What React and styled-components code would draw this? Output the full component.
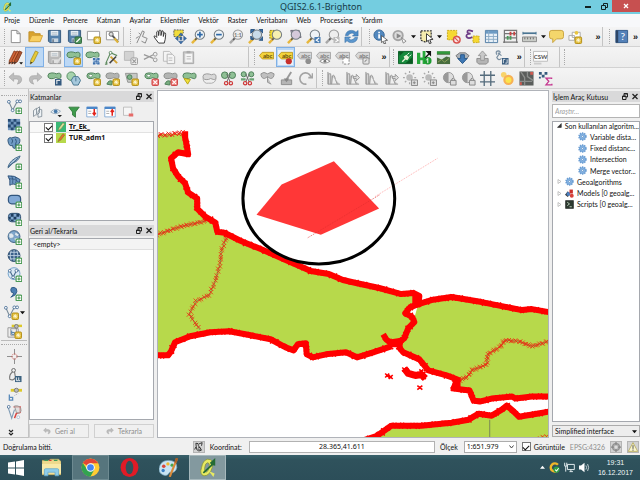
import React from "react";
import styled, { createGlobalStyle, css } from "styled-components";

const GlobalStyle = createGlobalStyle`
  * { box-sizing: border-box; }
  html, body, #root { margin: 0; height: 100%; }
  body { background: #fff; }
  body, button, input, select {
    font-family: Lato, "Liberation Sans", sans-serif;
    font-size: 7px;
    line-height: 10px;
    color: #111;
  }
  button { border: 0; background: none; padding: 0; }
  svg { display: block; }
  ul { list-style: none; margin: 0; padding: 0; }
`;

/* ---------- layout ---------- */
const Page = styled.div`
  height: 100vh;
  padding-bottom: 6px;
  display: flex;
  flex-direction: column;
  background: #fff;
  overflow: hidden;
`;
const TitleBar = styled.header`
  height: 14px;
  flex: none;
  display: grid;
  grid-template-columns: 1fr auto 1fr;
  align-items: center;
  background: #74cde0;
  padding-left: 2px;
`;
const Title = styled.h1`
  margin: 0;
  font: 9px/14px "Noto Sans", "Open Sans", sans-serif;
  color: #173b48;
`;
const WindowButtons = styled.div`
  display: flex;
  justify-content: flex-end;
  align-self: stretch;
`;
const WindowButton = styled.button`
  width: ${(p) => (p.$close ? 28 : 16)}px;
  height: 12px;
  display: grid;
  place-items: center;
  background: ${(p) => (p.$close ? "#c75050" : "transparent")};
`;
const MenuBar = styled.nav`
  flex: none;
  height: 13px;
  display: flex;
  gap: 9px;
  padding: 1px 4px;
  background: #f7f8fa;
`;
const MenuItem = styled.button`
  line-height: 11px;
  white-space: nowrap;
`;
const ToolRow = styled.div`
  flex: none;
  height: ${(p) => (p.$tall ? 21 : 20)}px;
  display: flex;
  align-items: stretch;
  background: linear-gradient(#f4f4f4, #ececec);
  border-bottom: 1px solid #d2d2d2;
`;
const Group = styled.div`
  flex: ${(p) => p.$w} 1 0;
  min-width: 0;
  display: flex;
`;
const ToolButton = styled.button`
  flex: ${(p) => (p.$small ? 2 : 5)} 1 0;
  min-width: 0;
  display: grid;
  place-items: center;
  ${(p) =>
    p.$active &&
    css`
      background: #bcd8f5;
      box-shadow: inset 0 0 0 1px #7fb0e6;
    `}
`;
const Handle = styled.div`
  flex: ${(p) => p.$w} 1 0;
  display: flex;
  justify-content: flex-end;
  padding: 2px 1px 2px 0;
  border-left: ${(p) => (p.$line ? "1px solid #c4c4c4" : "0")};
  &::after {
    content: "";
    border-left: 1px dotted #a9a9a9;
  }
`;
const More = styled.button`
  flex: ${(p) => p.$w} 1 0;
  min-width: 0;
  font: bold 9px/10px "Liberation Sans", sans-serif;
  text-align: center;
`;
const Main = styled.main`
  flex: 1;
  min-height: 0;
  display: grid;
  grid-template-columns: 29px 126px minmax(0, 1fr) 91px;
  background: #efefef;
`;
const SideBar = styled.aside`
  display: flex;
  flex-direction: column;
  min-height: 0;
  padding-top: 4px;
  border-right: 1px solid #c2c2c2;
  border-bottom: 1px solid #c2c2c2;
`;
const SideGroup = styled.div`
  display: grid;
  grid-auto-rows: 1fr;
  flex: ${(p) => p.$h} 1 0;
  min-height: 0;
`;
const SideHandle = styled.div`
  border-top: ${(p) => (p.$line ? "1px solid #bbb" : "0")};
  margin: 0 1px;
  height: ${(p) => (p.$line ? 7 : 4)}px;
  display: flex;
  align-items: center;
  &::after {
    content: "";
    flex: 1;
    border-top: 1px dotted #aaa;
  }
`;
const SideButton = styled.button`
  display: flex;
  align-items: center;
  justify-content: center;
  min-height: 0;
  gap: 1px;
`;
const DockColumn = styled.section`
  display: flex;
  flex-direction: column;
  gap: ${(p) => (p.$right ? 0 : 4)}px;
  min-height: 0;
  min-width: 0;
  padding: ${(p) => (p.$right ? "2px 0 1px 3px" : "2px 1px 0 0")};
`;
const Dock = styled.section`
  display: flex;
  flex-direction: column;
  min-height: 0;
  flex: ${(p) => p.$h} 1 0;
`;
const DockTitle = styled.header`
  height: 11px;
  flex: none;
  display: flex;
  align-items: center;
  gap: 4px;
  padding: 0 2px 0 1px;
  background: #d9d9da;
  & > h2 {
    flex: 1;
    min-width: 0;
    margin: 0;
    font-size: 7px;
    font-weight: normal;
    white-space: nowrap;
  }
`;
const DockTools = styled.div`
  height: 19px;
  flex: none;
  display: flex;
  gap: 4px;
  padding-left: 2px;
  & > button {
    width: 14px;
    display: grid;
    place-items: center;
  }
`;
const Sheet = styled.div`
  flex: 1;
  min-height: 0;
  background: #fff;
  border: 1px solid #a5a8ae;
  margin-top: ${(p) => p.$top || 0}px;
`;
const LayerItem = styled.li`
  height: 11px;
  display: flex;
  align-items: center;
  padding-left: 14px;
  border-bottom: 1px solid ${(p) => (p.$current ? "#e2e2e2" : "transparent")};
  background: ${(p) => (p.$current ? "#f8f8f8" : "#fff")};
  & > label {
    display: flex;
    align-items: center;
    gap: 3px;
    font: bold 7px/10px "Noto Sans", sans-serif;
    text-decoration: ${(p) => (p.$current ? "underline" : "none")};
  }
`;
const Check = styled.input.attrs({ type: "checkbox" })`
  appearance: none;
  width: 9px;
  height: 9px;
  margin: 0;
  border: 1px solid #777;
  background: #fff;
  display: grid;
  place-items: center;
  &:checked::before {
    content: "";
    width: 5px;
    height: 3px;
    border: solid #111;
    border-width: 0 0 1px 1px;
    transform: rotate(-45deg);
  }
`;
const UndoRow = styled.div`
  padding: 0 3px;
  background: #f4f4f4;
  border-bottom: 1px solid #e0e0e0;
`;
const ButtonPair = styled.div`
  flex: none;
  display: grid;
  grid-template-columns: 1fr 1fr;
  gap: 5px;
  padding-top: 4px;
`;
const DisabledButton = styled.button`
  height: 14px;
  display: flex;
  align-items: center;
  justify-content: center;
  gap: 4px;
  border: 1px solid #d0d0d0;
  background: #f0f0f0;
  color: #8d8d8d;
`;
const MapFrame = styled.div`
  margin-left: 2px;
  margin-top: 1px;
  min-width: 0;
  min-height: 0;
  border: 1px solid #b0b3b9;
  background: #fff;
  overflow: hidden;
  & > svg {
    width: 100%;
    height: 100%;
  }
`;
const Search = styled.input`
  height: 14px;
  min-width: 0;
  margin: 2px 0 3px;
  padding: 0 2px;
  border: 1px solid #b4b4b4;
  background: #fff;
  font-style: italic;
  &::placeholder { color: #a0a0a0; }
`;
const Tree = styled.ul`
  display: grid;
  grid-template-rows: repeat(8, 1fr);
  height: 90px;
  margin-top: -2px;
`;
const TreeItem = styled.li`
  display: flex;
  align-items: center;
  min-width: 0;
  gap: 3px;
  padding-left: ${(p) => (p.$leaf ? 25 : 4)}px;
  white-space: nowrap;
`;
const SelectBox = styled.div`
  display: grid;
  align-items: center;
  min-width: 0;
  width: ${(p) => (p.$fixed ? "53px" : "auto")};
  margin-top: ${(p) => (p.$fixed ? 0 : 3)}px;
  & > * { grid-area: 1 / 1; }
  & > svg { justify-self: end; margin-right: 3px; pointer-events: none; }
`;
const Select = styled.select`
  appearance: none;
  width: 100%;
  height: 12px;
  padding: 0 2px;
  border: 1px solid #acacac;
  border-radius: 0;
  background: ${(p) => (p.$plain ? "#fff" : "#ededed")};
  font-family: ${(p) => (p.$plain ? '"Noto Sans", sans-serif' : "inherit")};
`;
const StatusBar = styled.footer`
  flex: none;
  height: 17px;
  display: flex;
  align-items: center;
  gap: 5px;
  padding: 0 1px 0 3px;
  background: #f0f0f0;
  white-space: nowrap;
`;
const StatusText = styled.output`
  flex: 187 1 0;
`;
const CoordLabel = styled.label`
  flex: 228 1 0;
  display: flex;
  align-items: center;
  gap: 7px;
`;
const CoordInput = styled.input`
  flex: 1;
  min-width: 0;
  height: 12px;
  padding: 0;
  border: 1px solid #b2b2b2;
  background: #fff;
  text-align: center;
  font-family: "Noto Sans", sans-serif;
`;
const InlineLabel = styled.label`
  display: flex;
  align-items: center;
  gap: ${(p) => (p.$wide ? 6 : 3)}px;
`;
const Muted = styled.button`
  color: #8f8f8f;
`;
const IconButton = styled.button`
  width: 12px;
  height: 12px;
  display: grid;
  place-items: center;
  background: #d2d2d2;
  border: 1px solid #b4b4b4;
`;
const TaskBar = styled.nav`
  flex: none;
  height: 25px;
  display: flex;
  background: linear-gradient(#3a626c, #2f525c 20%, #2c4e59);
`;
const TaskButton = styled.button`
  width: ${(p) => (p.$start ? 31 : 37)}px;
  margin-right: 2px;
  display: grid;
  place-items: center;
  ${(p) => p.$level === 1 && "background:#56757d; box-shadow: inset 0 0 0 1px #6d8a91;"}
  ${(p) => p.$level === 2 && "background:#83999f; box-shadow: inset 0 0 0 1px #a6b8bc;"}
`;
const Tray = styled.div`
  margin-left: auto;
  display: flex;
  align-items: center;
  gap: 4px;
  padding-right: 7px;
`;
const Clock = styled.time`
  color: #f2f7f8;
  font-family: "Liberation Sans", sans-serif;
  text-align: center;
  padding-left: 4px;
  & > span { display: block; }
`;

/* ---------- icon parts ---------- */
const BLOB = "M1 5Q1 2 5 2Q8 2 10 3Q15 1 15 5Q15 9 12 8Q9 6 7 8Q1 9 1 5Z";
const Svg = ({ s = 15, children }) => (
  <svg width={s} height={s} viewBox="0 0 16 16" fill="none" aria-hidden="true">
    {children}
  </svg>
);
const Blob = ({ grey, hole }) => (
  <>
    <path d={BLOB} fill={grey ? "#b3b5b3" : "#8fc095"} stroke={grey ? "#8b8d8b" : "#4a7d55"} />
    {hole && <ellipse cx="5" cy="5" rx="2" ry="1.4" fill="#fff" stroke={grey ? "#8b8d8b" : "#4a7d55"} strokeWidth=".7" />}
  </>
);
const Star = ({ x = 8, y = 8 }) => (
  <g transform={`translate(${x} ${y})`}>
    <rect x=".5" y=".5" width="7" height="7" rx="1.2" fill="#e3bd38" stroke="#b18d16" />
    <path d="M4 1.6V6.4M1.6 4H6.4M2.4 2.4L5.6 5.6M5.6 2.4L2.4 5.6" stroke="#fffbe0" strokeWidth=".8" />
  </g>
);
const Cross = ({ grey }) => (
  <g transform="translate(8 8)">
    <rect x=".5" y=".5" width="7" height="7" rx="1.2" fill={grey ? "#eee" : "#ec7b78"} stroke={grey ? "#999" : "#cb3f3f"} />
    <path d="M2 2L6 6M6 2L2 6" stroke={grey ? "#999" : "#fff"} strokeWidth="1.2" />
  </g>
);
const Plus = () => (
  <g transform="translate(9 9)">
    <rect x=".7" y=".7" width="6" height="6" rx="1" fill="#fff" stroke="#4b9a55" strokeWidth="1.3" />
    <path d="M3.7 2V5.4M2 3.7H5.4" stroke="#3c8f47" strokeWidth="1.1" />
  </g>
);
const Disk = ({ grey }) => (
  <>
    <path d="M1.5 1.5H14.5V14.5H3L1.5 13Z" fill={grey ? "#b9b9b9" : "#5380ab"} stroke={grey ? "#999" : "#34587c"} />
    <path d="M4 2H12V7H4Z" fill={grey ? "#ededed" : "#e8eff5"} />
    <path d="M5 4H11M5 5.6H11" stroke="#9aabb8" strokeWidth=".7" />
    <path d="M5 10H12V14H5Z" fill={grey ? "#e0e0e0" : "#c9d6e1"} />
    <path d="M6.5 11V14" stroke={grey ? "#999" : "#54677a"} strokeWidth="1.4" />
  </>
);
const Mag = ({ grey, tint, children }) => (
  <>
    <path d="M1 15L6 10" stroke={grey ? "#a8a8a8" : "#e7b73c"} strokeWidth="2.6" />
    <path d="M4.4 11.6L6.4 9.6" stroke="#555" strokeWidth="1.6" />
    <circle cx="9.5" cy="6" r="5" fill={tint || (grey ? "#eee" : "#eef3f6")} stroke={grey ? "#999" : "#747d83"} strokeWidth="1.1" />
    {children}
  </>
);
const Label = ({ fill, stroke, text }) => (
  <>
    <path d="M.5 6L3.5 2.5H15.5V9.5H3.5Z" fill={fill} stroke={stroke} />
    <text x="9.3" y="8.3" fontSize="6.5" fontWeight="bold" textAnchor="middle" fill={text}>abc</text>
  </>
);
const Pencil = ({ c = "#e5c93a", d = "#a08b1f", dx = 0 }) => (
  <g transform={`translate(${dx} 0)`}>
    <path d="M4 11L9 1L12 2.5L7 12.5L3.5 15Z" fill={c} stroke={d} strokeWidth=".8" />
    <path d="M3.5 15L4 12.4L5.8 13.4Z" fill="#333" />
  </g>
);
const Sheet0 = () => <path d="M1.5 2.5H14.5V11.5H1.5Z" fill="#fff" stroke="#999" />;
const Gear = ({ s = 9 }) => (
  <Svg s={s}>
    <circle cx="8" cy="8" r="6" fill="#89b5e2" stroke="#6c9ed3" strokeWidth="3" strokeDasharray="2.4 1.4" />
    <circle cx="8" cy="8" r="4.6" fill="#8db9e6" stroke="#6a9dd2" />
    <circle cx="8" cy="8" r="1.8" fill="#e8f2fb" stroke="#4e83ba" />
  </Svg>
);
const Hist = ({ arrow }) => (
  <>
    <path d="M2 1V14H15M3 14V3H5V14M6 14L7 5Q9 3 10 9L12 14" fill="#c9c9c9" stroke="#979797" />
    {arrow && <path d="M9 6H12V3.5L15.5 7L12 10.5V8H9Z" fill="#ddd" stroke="#999" />}
  </>
);
const Dot = ({ cx, cy, r = 1.5, f = "#fff", s = "#446b94" }) => <circle cx={cx} cy={cy} r={r} fill={f} stroke={s} strokeWidth=".9" />;
const Raise = ({ lock }) => <path d={lock ? "M9 10H15V15H9ZM10.5 10V8.5Q12 6.5 13.5 8.5V10" : "M9 9.5H15.5V15.5H9ZM12 11V14M10.5 12.5H13.5"} fill="#ddd" stroke="#858585" />;
const Globe = () => (
  <>
    <circle cx="7.5" cy="7" r="6.3" fill="#7fa9d0" stroke="#34597e" />
    <path d="M2 4Q5 2 7 5T4 9L2 8ZM9 2L13 5L11 7L8 5ZM7 9L12 8L10 13Z" fill="#dfe9f0" stroke="#5d83a6" strokeWidth=".5" />
  </>
);

const I = {
  file: <path d="M3.500 1.500H9.500L13 5V14.500H3.500ZM9.500 1.500V5H13" fill="#fff" stroke="#8a8a8a" />,
  open: <><path d="M1 13V3H6L7.500 5H13V8" fill="#d9a32e" stroke="#c0902a" /><path d="M1 13.500L4 7H15.500L13 13.500Z" fill="#f8cf62" stroke="#d5a338" /></>,
  save: <Disk />,
  saveAs: <><Disk /><rect x="8.500" y="8.500" width="7" height="7" rx="1" fill="#4b8f58" stroke="#2f6a3c" /><path d="M10 14L14 10" stroke="#fff" strokeWidth="1.500" /></>,
  newPrint: <><Sheet0 /><Star /></>,
  composer: <><Sheet0 /><path d="M7 6L14 14" stroke="#555" strokeWidth="2" /><path d="M10 10L14 14.500" stroke="#e0b53c" strokeWidth="2.400" /><circle cx="6.500" cy="5.500" r="2.200" fill="#ddd" stroke="#666" /></>,
  touch: <path d="M3 15L9 2L11 3L9 8L14 10L12 15L8 13M2 10L5 8M5 4L7 6" fill="#eee" stroke="#858585" />,
  hand: <path d="M6 15Q2 10 1 8Q2 6 4 9L4 3Q5 1.500 6 3V7L6.500 1.500Q8 .5 8.500 2V7L9.500 2Q11 1.500 11 3V8L12 4Q14 4 13.500 6L13 11L12 15Z" fill="#fff" stroke="#333" />,
  panSel: <><path d="M2 1H12V4L9 9L2 8Z" fill="#f2dd3a" stroke="#555" strokeDasharray="2 1" /><path d="M9.500 4L12 7H7ZM9.500 16L7 13H12ZM3.500 10L6.500 7.500V12.500ZM15.500 10L12.500 7.500V12.500ZM8.500 8.500H10.500V11.500H8.500Z" fill="#3b70ad" stroke="#244c7b" strokeWidth=".5" /></>,
  zoomIn: <Mag><path d="M9.500 3V9M6.500 6H12.500" stroke="#2e69a8" strokeWidth="1.800" /></Mag>,
  zoomOut: <Mag><path d="M6.500 6H12.500" stroke="#2e69a8" strokeWidth="1.800" /></Mag>,
  zoom1: <Mag grey><text x="9.500" y="8.200" fontSize="6" textAnchor="middle" fontWeight="bold" fill="#777">1:1</text></Mag>,
  zoomFull: <><Mag tint="#c8dbe9" /><path d="M3 .5H7L3 4.500ZM16 .5V4.500L12 .5ZM16 12H12L16 8ZM3 7.500V11L6 11Z" fill="#3d70a6" stroke="#28527f" /></>,
  zoomSel: <><path d="M2 1.500H10V10H2Z" fill="#f6df33" stroke="#8f7b16" strokeDasharray="2 1" /><Mag tint="#f7efb0" /></>,
  zoomLayer: <><path d="M4 1.500H13L15 9H6Z" fill="#a8a1b2" stroke="#6d6578" /><Mag tint="#d5c9da" /></>,
  zoomLast: <><Mag /><path d="M9 8.500H15.500V15H9Z" fill="#4b7eb2" /><path d="M14 9.500L11 12L14 14" stroke="#fff" strokeWidth="1.200" /></>,
  zoomNext: <><Mag grey /><path d="M9 8.500H15.500V15H9Z" fill="#bbb" /><path d="M11 9.500L14 12L11 14" stroke="#fff" strokeWidth="1.200" /></>,
  refresh: <><path d="M1.500 7Q2.500 1.500 8 1.500Q11 1.500 12.800 3.500L15 1.500V7.500H9L11 5.500Q9.500 4 7.500 4.500Q5 5 4.500 7Z" fill="#4f8cc6" stroke="#2f6aa3" strokeWidth=".6" /><path d="M14.500 9Q13.500 14.500 8 14.500Q5 14.500 3.200 12.500L1 14.500V8.500H7L5 10.500Q6.500 12 8.500 11.500Q11 11 11.500 9Z" fill="#5d98cf" stroke="#2f6aa3" strokeWidth=".6" /></>,
  identify: <><circle cx="6.500" cy="6.500" r="5.500" fill="#5288bf" stroke="#356696" /><path d="M6.500 3V4.500M6.500 5.500V10" stroke="#fff" strokeWidth="1.800" /><path d="M9 7L15.500 12L12.500 12.500L13.500 15.500L11.500 15.500L11 13L9 14.500Z" fill="#fff" stroke="#444" strokeWidth=".8" /></>,
  action: <><circle cx="6.500" cy="7" r="5" fill="#ddd" stroke="#a4a4a4" strokeWidth="2" /><path d="M5 4.500L10 7.500L5 10Z" fill="#888" /><path d="M10 9L15 13L12 15Z" fill="#fff" stroke="#888" /></>,
  select: <><path d="M2 2H13V8L7 14L2 12Z" fill="#f5ecad" stroke="#333" strokeDasharray="2 1.200" strokeWidth="1.300" /><path d="M8 5L15 11L11.500 11.500L13 15L11 15.500L10 12L8 13.500Z" fill="#fff" stroke="#333" /></>,
  deselect: <><path d="M1.500 1.500H11.500V11.500H1.500Z" fill="#f6d832" stroke="#c8a91b" strokeDasharray="2 1" /><circle cx="11.500" cy="11.500" r="3.500" fill="#fbe6e6" stroke="#d9534f" strokeWidth="1.600" /><path d="M9.500 9.500L13.500 13.500" stroke="#d9534f" strokeWidth="1.300" /></>,
  epsilon: <><path d="M8.500 2.500Q2 0 2.500 3.500Q3 5 6 5Q1 5 1.500 8Q3 11 8 8.500" stroke="#6c3a85" strokeWidth="1.800" /><path d="M8.500 7.500H15V14.500H8.500Z" fill="#f6d832" stroke="#c8a91b" strokeDasharray="2 1" /></>,
  table: <><path d="M1.500 1.500H14.500V14.500H1.500Z" fill="#e8f0f7" stroke="#4f7ba3" /><path d="M2 2H14V5H2Z" fill="#6c9bc4" /><path d="M5 2V14M2 8H14M2 11H14M10 5V14" stroke="#8cacc6" /></>,
  abacus: <><path d="M1.500 15V1.500H14.500V15M1.500 5H14.500M1.500 9.500H14.500M0 14H16" stroke="#777" strokeWidth="1.300" /><path d="M7 3H9V7H7ZM11 3H13V7H11Z" fill="#c94340" /><path d="M4 7.500H6V11.500H4ZM7 7.500H9V11.500H7Z" fill="#489858" /></>,
  ruler: <><path d="M1 4.500H15" stroke="#4a7593" strokeWidth="1.800" /><path d="M1 3V6M15 3V6" stroke="#4a7593" /><path d="M.5 8.500H15.500V13.500H.5Z" fill="#c9ccc7" stroke="#888" /><path d="M3 9V11M6 9V11M9 9V11M12 9V11" stroke="#666" /></>,
  tip: <path d="M3 1.500H13Q15.500 1.500 15.500 4V8Q15.500 10.500 13 10.500H8L4 14.500V10.500H3Q.5 10.500 .5 8V4Q.5 1.500 3 1.500Z" fill="#f4d66b" stroke="#c8a13a" />,
  note: <><path d="M4.500 3.500H13V9H4.500ZM1 7H7V12H1Z" fill="#fff" stroke="#aaa" /><circle cx="9" cy="4" r="2" fill="#eac641" /><Star x={7} y={8} /></>,
  book: <><path d="M2 1.500H14.500V14.500H2Z" fill="#5481b8" stroke="#335a8a" /><path d="M2 1.500H4.500V14.500H2Z" fill="#2e4666" /><text x="9.500" y="12" fontSize="11" textAnchor="middle" fill="#fff">?</text></>,
  edits: <><Pencil c="#cf6337" d="#7c3213" dx={-2.5} /><Pencil c="#d8703f" d="#7c3213" dx={0.5} /><Pencil c="#a95331" d="#7c3213" dx={3} /><path d="M12 13H16L14 15.500Z" fill="#111" /></>,
  edit: <Pencil />,
  saveGrey: <><Disk grey /><path d="M10 14L15 8" stroke="#ddd" strokeWidth="2" /></>,
  addFeat: <><Blob /><Star /></>,
  moveFeat: <><Blob /><path d="M8 8H15.500V15.500H8Z" fill="#dbe7f3" /><path d="M8.500 8.500H11V11H8.500ZM13 8.500H15.500V11H13ZM8.500 13H11V15.500H8.500ZM13 13H15.500V15.500H13Z" fill="#3e71ad" /><path d="M12 9V15M9 12H15" stroke="#3e71ad" /></>,
  node: <><path d="M2 14L7 3L14 6M1 15H3V13" stroke="#5d8a5e" strokeWidth="1.200" /><Dot cx="7" cy="3" s="#4d7d54" /><path d="M7 7L14 14" stroke="#d2a233" strokeWidth="2" /><path d="M13 7L6 14" stroke="#444" strokeWidth="1.600" /></>,
  del: <><path d="M1.500 1.500H11.500V11H1.500Z" fill="#d2d2d2" stroke="#b7b7b7" /><Cross grey /></>,
  cut: <><path d="M1 5L11 9M1 10L11 5" stroke="#999" strokeWidth="1.300" /><circle cx="13" cy="4.500" r="2" stroke="#999" /><circle cx="13" cy="10.500" r="2" stroke="#999" /></>,
  copy: <><path d="M1.500 1.500H8L10 3.500V12H1.500Z" fill="#f4f4f4" stroke="#bbb" /><path d="M5.500 4.500H11L13.500 7V14.500H5.500Z" fill="#f4f4f4" stroke="#b3b3b3" /><path d="M7 8.500H11M7 11H11" stroke="#bbb" /></>,
  paste: <><path d="M2.500 2H13.500V14.500H2.500Z" fill="#c9c9c9" stroke="#a8a8a8" /><path d="M4.500 4H12V13H4.500Z" fill="#f4f4f4" /><path d="M6 1H10V3.500H6Z" fill="#aaa" /><path d="M6 7H10.500M6 9.500H10.500" stroke="#bbb" /></>,
  abc: <Label fill="#f3d33c" stroke="#bf9c22" text="#5c4a0c" />,
  abcPin: <><path d="M0 0H16V16H0Z" fill="#e9f1fa" /><Label fill="#f3d33c" stroke="#bf9c22" text="#5c4a0c" /><circle cx="11.500" cy="12" r="3.300" fill="#c8302c" /></>,
  abcG1: <><Label fill="#d7d7d7" stroke="#a5a5a5" text="#777" /><circle cx="12" cy="12" r="3" fill="#8f8f8f" /></>,
  abcG2: <><Label fill="#d7d7d7" stroke="#a5a5a5" text="#777" /><path d="M4 12Q9 7.500 15 12Q9 16 4 12Z" fill="#fff" stroke="#888" /><circle cx="9.500" cy="12" r="1.500" fill="#777" /></>,
  abcG3: <><Label fill="#d7d7d7" stroke="#a5a5a5" text="#777" /><path d="M8.500 8.500H15V15H8.500Z" fill="#fff" stroke="#888" strokeDasharray="2.500 1.500" /></>,
  abcG4: <><Label fill="#d7d7d7" stroke="#a5a5a5" text="#777" /><rect x="8.500" y="8.500" width="6.500" height="6.500" rx="1" fill="#e5e5e5" stroke="#888" /><path d="M10.500 13Q10.500 10.500 13 10.500" stroke="#888" /></>,
  plug: <><path d="M.5 1.500H15.500V14.500H.5Z" fill="#168b3c" stroke="#0b5f26" /><path d="M1 2H6L2 6ZM8 14L15 8V14Z" fill="#0a5a22" /><path d="M4 12L7 9L6 7L9 5L12 8L10 11L8 10L5 13Z" fill="#e7f2d7" /><path d="M10 5L12 3M12 7L14 5" stroke="#fff" /></>,
  hub: <><path d="M0 15V3H3.500V8H6V1H9V15H6V11H3.500V15Z" fill="#28a83c" /><path d="M9 1H15V7L13 5L9 9L8 8L12 4Z" fill="#111" /><circle cx="11.500" cy="11.500" r="4" fill="#1d9c31" /><path d="M10 11L11.500 9V14" stroke="#fff" /></>,
  terrain: <><path d="M1 1.500H15V15H1Z" fill="#486e3f" /><path d="M1 1.500H15V4H1Z" fill="#2f9c3b" /><path d="M1 5H15V8L11 7L6 10L1 8Z" fill="#d9e3df" /><path d="M2 13L6 10L9 13L14 9" stroke="#92a35d" /></>,
  down: <><path d="M1 6L5 3H11L15 6L12 10H4Z" fill="#aeb4bb" stroke="#777" /><path d="M6 5H10V9H13L8 14.500L3 9H6Z" fill="#3f78b5" stroke="#285788" /></>,
  up: <><path d="M2 9H14V13L12 15H4L2 13Z" fill="#b5b5b5" stroke="#8b8b8b" /><path d="M6 11H10V6H12.500L8 1L3.500 6H6Z" fill="#c9c9c9" stroke="#999" /></>,
  gps: <><path d="M3 5Q1 1 5 1Q8 2 5 5L3 8Q5 12 8 9M4 3L8 6" stroke="#7a8fa1" strokeWidth="1.300" /><path d="M8.500 8.500H15.500V15.500H8.500Z" fill="#3b5e80" /><path d="M10 14V10H12M12 14H14V10" stroke="#fff" strokeWidth=".8" /></>,
  csw: <><path d="M.5 1.500H15.500V12H.5Z" fill="#fdfdfd" stroke="#bbb" /><path d="M1 14.500H9" stroke="#ccc" strokeWidth="2" /><text x="8" y="9.300" fontSize="6.500" fontWeight="bold" textAnchor="middle" fill="#555">CSW</text></>,
  undo: <path d="M1 6.500L6 2V5H10Q15 5 14.500 10Q14 13 10 14Q13 8.500 9 8.500H6V11Z" fill="#bcbcbc" stroke="#a3a3a3" strokeWidth=".7" />,
  redo: <path d="M15 6.500L10 2V5H6Q1 5 1.500 10Q2 13 6 14Q3 8.500 7 8.500H10V11Z" fill="#bcbcbc" stroke="#a3a3a3" strokeWidth=".7" />,
  rotate: <><Blob /><path d="M8.500 8.500H15.500V15.500H8.500Z" fill="#33597f" /><path d="M10 10H14M10.500 10V14" stroke="#fff" /></>,
  simplify: <><circle cx="5.500" cy="5.500" r="4.500" fill="#a6d3ad" stroke="#558c61" /><path d="M8 6H13L15.500 10L13 15H8L5.500 10Z" fill="#a5c8dc" stroke="#44738e" /><path d="M10.500 7V11" stroke="#44738e" /></>,
  ring: <><Blob hole /><Star /></>,
  part: <><Blob grey /><path d="M2 14Q4 9 8 11L7 15Z" fill="#79ad80" stroke="#4a7d55" /><Star /></>,
  fill: <><path d="M1.500 2.500H14V12H4Z" fill="#c6c8c5" stroke="#919391" /><circle cx="6" cy="6.500" r="2.500" fill="#7fb389" stroke="#4a7d55" /><Star /></>,
  delRing: <><Blob hole /><Cross /></>,
  delPart: <><Blob grey /><path d="M2 14Q4 9 8 11L7 15Z" fill="#79ad80" stroke="#4a7d55" /><Cross /></>,
  reshape: <><Blob /><path d="M2 8L9 9L6 14Z" fill="#f1e13c" stroke="#b7a316" /></>,
  offset: <><path d={BLOB} fill="#d8d8d8" stroke="#999" transform="translate(0 1)" /><path d="M1 8Q2 14 7 13Q14 14 15 8" stroke="#aaa" /></>,
  split: <><circle cx="4" cy="4.500" r="3.500" fill="#8fc095" stroke="#4a7d55" /><circle cx="12" cy="4.500" r="3.500" fill="#8fc095" stroke="#4a7d55" /><path d="M6 12L10 3M10 12L6 3" stroke="#666" /><circle cx="5.500" cy="13" r="1.800" stroke="#cf3535" strokeWidth="1.300" /><circle cx="10.500" cy="13" r="1.800" stroke="#cf3535" strokeWidth="1.300" /></>,
  splitParts: <><circle cx="4" cy="3.500" r="2.700" fill="#8fc095" stroke="#4a7d55" /><circle cx="12" cy="3.500" r="2.700" fill="#8fc095" stroke="#4a7d55" /><path d="M1 9H6M10 9H15" stroke="#6aa274" strokeWidth="2.500" /><path d="M6 12L10 3M10 12L6 3" stroke="#666" /><circle cx="5.500" cy="13" r="1.800" stroke="#cf3535" strokeWidth="1.300" /><circle cx="10.500" cy="13" r="1.800" stroke="#cf3535" strokeWidth="1.300" /></>,
  merge: <path d="M1 3Q4 0 8 3Q12 0 15 3Q15 8 11 8L8 6L5 8Q1 8 1 3ZM8 6V12L12 14" fill="#c0c0c0" stroke="#939393" />,
  attrs: <><path d="M2.500 9.500H13.500V14.500H2.500Z" fill="#b5b5b5" stroke="#8d8d8d" /><path d="M8 9L13 1" stroke="#999" strokeWidth="2" /><path d="M5 8H11L8 12Z" fill="#888" /></>,
  symbols: <path d="M14 8A6 6 0 1 0 9 14M11 7H15.500V2.500" stroke="#a4a4a4" strokeWidth="1.800" />,
  h1: <Hist />, h2: <Hist arrow />,
  bright: <><circle cx="7" cy="7" r="3.500" fill="#bbb" /><path d="M7 0V2M7 12V14M0 7H2M12 7H14M2 2L3.500 3.500M12 2L10.500 3.500M2 12L3.500 10.500" stroke="#aaa" strokeWidth="1.300" /><Raise /></>,
  contrast: <><circle cx="7" cy="7" r="5.500" fill="#ddd" stroke="#999" /><path d="M7 1.500A5.500 5.500 0 0 0 7 12.500Z" fill="#999" /><Raise lock /></>,
  grid: <path d="M4.500 0V16M11.500 0V16M0 4.500H16M0 11.500H16" stroke="#546b7c" strokeWidth="1.400" />,
  heat: <><circle cx="4" cy="4" r="3" fill="#f8d36a" /><circle cx="9" cy="9.500" r="5.500" fill="#f7b155" /><circle cx="9" cy="9.500" r="3.200" fill="#fbe54d" /></>,
  raster: <><path d="M.5 .5H15.500V15.500H.5Z" fill="#5a5d5b" /><path d="M2 1L6 7V15M9 1V6L15 10M1 11H14" stroke="#8b8e8c" strokeWidth="1.400" /><path d="M12 1H15V4H12ZM1 12H3V15H1Z" fill="#cf5a50" /></>,
  sigma: <><path d="M1 1H4V4H1ZM4 4H7V7H4ZM7 1H10V4H7ZM1 6H3V8H1Z" fill="#34597c" /><path d="M14.500 8.500V7.500H8.500L11.500 11L8.500 14.800H14.800V13.500" stroke="#c5358f" strokeWidth="1.400" /></>,
};

const SIDE = {
  vector: <><path d="M2 3L6 12L11 2.500H14" stroke="#7b8c99" strokeWidth="1.200" /><Dot cx="2" cy="3" /><Dot cx="6" cy="12" /><Dot cx="11" cy="2.500" /><Dot cx="14" cy="2.500" /><Plus /></>,
  raster: <><path d="M1 1H14V13H1Z" fill="#7398c0" /><path d="M1 1H4V4H1ZM7 1H10V4H7ZM4 4H7V7H4ZM10 4H14V7H10ZM1 7H4V10H1ZM7 7H10V10H7ZM4 10H7V13H4Z" fill="#264b73" /><Plus /></>,
  postgis: <><path d="M1 5Q1 1 5 2Q9 0 12 2Q15 3 13 8Q11 11 9 9V13Q6 14 6 10Q2 12 1 5Z" fill="#6f9bc4" stroke="#2e5378" /><path d="M5 3Q7 5 5 8M9 3Q11 6 9 9" stroke="#2e5378" /><Plus /></>,
  spatialite: <><path d="M1 13Q3 5 14 1Q12 7 5 9Z" fill="#a8c3da" stroke="#3f6587" /><path d="M1 14L12 3" stroke="#3f6587" /><Plus /></>,
  mssql: <><path d="M1 2Q8 1 14 6L12 13Q7 9 3 12Q4 6 1 2Z" fill="#6e98c4" stroke="#2b4f77" /><path d="M5 2Q7 6 6 10M9 3Q11 7 9 10M2 5Q8 4 13 9" stroke="#2b4f77" strokeWidth=".8" /><Plus /></>,
  oracle: <><rect x="1.500" y="2.500" width="13" height="9" rx="3.500" fill="#82a9d6" stroke="#32567e" strokeWidth="1.300" /><Plus /></>,
  georaster: <><rect x="1.500" y="2.500" width="13" height="9" rx="3.500" fill="#83a9d0" stroke="#244567" /><path d="M4 3H7V6H4ZM10 3H13V6H10ZM7 6H10V9H7ZM2 6H4V9H2ZM4 9H7V11H4Z" fill="#1f3e60" /><Plus /></>,
  wms: <><Globe /><Plus /></>,
  wcs: <><circle cx="7.500" cy="7" r="6.300" fill="#395f8a" stroke="#254567" /><path d="M1 7H14M7.500 1V13M3 3.500H12M3 10.500H12M4.500 2Q2 7 4.500 12M10.500 2Q13 7 10.500 12" stroke="#c7d8e6" strokeWidth=".9" /><Plus /></>,
  wfs: <><circle cx="7.500" cy="7" r="6.300" fill="#dbe9f5" stroke="#6d9fc9" /><path d="M3 4L6.500 11L10 4H13" stroke="#4b6d8d" strokeWidth="1.200" /><Dot cx="3" cy="4" /><Dot cx="6.500" cy="11" /><Dot cx="10" cy="4" /><Plus /></>,
  csv: <><path d="M4 4Q4 1 7.500 1.500Q11 2 10.500 6Q10 10 4 12Q7 9.500 7 7.500Q4 7.500 4 4Z" fill="#4c7fb3" stroke="#305a86" /><Plus /></>,
  newShape: <><path d="M2 3L6 12L11 2.500H14" stroke="#7b8c99" strokeWidth="1.200" /><Dot cx="2" cy="3" /><Dot cx="6" cy="12" /><Dot cx="11" cy="2.500" /><Dot cx="14" cy="2.500" /><Star /></>,
  copyLayer: <><path d="M1 4H10V14H1ZM4 5H12V12H4Z" fill="#eee" stroke="#999" /><path d="M5 2H16" stroke="#ddc928" strokeWidth="2.600" /><circle cx="10" cy="2.500" r="2" fill="#bbb" stroke="#777" /><path d="M5 7V11H8V9H5" stroke="#4878a8" /><Star /></>,
  cross: <><path d="M8 0V6M8 10V16M0 8H6M10 8H16" stroke="#8a8a8a" /><circle cx="8" cy="8" r="2.800" stroke="#cf5a52" strokeDasharray="1.500 1" /></>,
  gps: <><circle cx="7" cy="2.500" r="2" stroke="#666" /><path d="M6 4Q2 7 3 12Q7 14 9 10L8 4" stroke="#777" strokeWidth="1.200" /><path d="M8.500 8.500H15.500V15H8.500Z" fill="#3b6280" /><path d="M10 10V13.500H12M12.500 10V13.500H14" stroke="#fff" strokeWidth=".9" /></>,
  label: <><path d="M4 3.500H16" stroke="#ddc928" strokeWidth="3" /><circle cx="10" cy="3.500" r="2.200" fill="#bbb" stroke="#777" /><path d="M2.500 8V14H6V11H3" stroke="#5b8bba" strokeWidth="1.400" /><path d="M8 9L12 7" stroke="#aaa" strokeDasharray="1 1" /></>,
  topo: <><path d="M1 2L5 14L8 5" stroke="#7f9bb5" strokeWidth="1.200" /><path d="M7 2H14V8L10 9L8 14" stroke="#d9423d" strokeWidth="1.500" /><path d="M8 1Q15 0 15 6Q14 10 10 8Z" fill="#d5d5d5" fillOpacity=".6" stroke="#999" /><Dot cx="1.800" cy="2" /><Dot cx="12" cy="13" s="#a7bdd2" /></>,
};

const Tri = ({ dir = "down" }) => (
  <svg width="5" height="5" viewBox="0 0 6 6" aria-hidden="true">
    <path d={dir === "down" ? "M0 1.500H6L3 5Z" : "M0 4.500H6L3 1Z"} fill={dir === "down" ? "#111" : "#fff"} />
  </svg>
);

const Tools = ({ names, w, active = [] }) => (
  <Group $w={w}>
    {names.split(" ").map((n, i) =>
      n === "v" ? (
        <ToolButton key={i} $small aria-label="more"><Tri /></ToolButton>
      ) : (
        <ToolButton key={i} $active={active.includes(n)} aria-label={n}>
          <Svg>{I[n]}</Svg>
        </ToolButton>
      )
    )}
  </Group>
);

const DockHead = ({ children }) => (
  <DockTitle>
    <h2>{children}</h2>
    <button aria-label="Float">
      <svg width="6" height="7" viewBox="0 0 6 7" fill="none">
        <path d="M2 3V.5H5.500V4H4M.5 3H4V6.500H.5ZM2 1H5.500M.5 3.500H4" stroke="#222" />
      </svg>
    </button>
    <button aria-label="Close">
      <svg width="6" height="7" viewBox="0 0 6 7"><path d="M.5 1L5.500 6M5.500 1L.5 6" stroke="#222" strokeWidth="1.300" /></svg>
    </button>
  </DockTitle>
);

/* ---------- map ---------- */
const COAST = {
  west: [[184,133],[186,142],[188,154],[178,152],[171,158],[173,168],[178,176],[185,183],[188,192],[197,198],[197,208],[205,216],[215,222],[217,231],[224,232],[240,240],[262,249],[285,259],[310,270],[328,273],[342,279],[355,282],[378,287],[400,293],[412,292],[418,295],[417,303],[409,306],[404,312],[411,316],[413,321],[407,327],[403,337],[396,342],[390,342],[385,338],[382,333]],
  southWest: [[390,345],[372,351],[356,356],[345,351],[325,353],[312,356],[306,353],[305,342],[297,343],[293,349],[285,346],[270,338],[250,334],[229,330],[210,331],[190,335],[175,341],[171,350],[168,354],[157,354]],
  east: [[417,303],[430,299],[450,296],[480,301],[500,305],[520,309],[530,308],[547,311]],
  south: [[397,345],[402,351],[418,358],[427,369],[445,374],[456,378],[452,387],[468,389],[472,399],[478,400],[490,397],[510,395],[514,397],[530,395],[547,395]],
  lower: [[352,442],[376,434],[390,424],[420,424],[450,421],[467,418],[477,412],[490,414],[500,408],[505,404],[512,410],[517,415],[535,412],[547,410]],
  isle: [[403,367],[407,372],[414,374],[420,373],[424,377]],
};
const BORDERS = [
  [[157,234],[180,226],[207,220]],
  [[226,237],[221,250],[220,262],[215,280],[209,294],[196,300],[189,313],[200,329]],
  [[459,379],[467,374],[470,369],[485,363],[486,353],[499,345],[503,339],[517,340],[530,345],[547,340]],
];
const line = (pts) => "M" + pts.map((p) => p.join(" ")).join("L");
function crosses(pts, step, size, jitter) {
  let d = "";
  let n = 0;
  for (let i = 1; i < pts.length; i++) {
    const [x0, y0] = pts[i - 1];
    const [x1, y1] = pts[i];
    const k = Math.max(1, Math.round(Math.hypot(x1 - x0, y1 - y0) / step));
    for (let j = 0; j < k; j++, n++) {
      const x = x0 + ((x1 - x0) * j) / k + jitter * Math.sin(n * 2.7);
      const y = y0 + ((y1 - y0) * j) / k + jitter * Math.cos(n * 1.9);
      d += `M${x - size} ${y - size}l${2 * size} ${2 * size}m0 ${-2 * size}l${-2 * size} ${2 * size}`;
    }
  }
  return d;
}
const Land = () => {
  const c = COAST;
  const westLand = [[157, 134], ...c.west.slice(0, 34), ...c.southWest];
  const eastLand = [...c.east, ...c.south.slice().reverse(), [405, 335], [412, 320]];
  const lowerLand = [...c.lower, [547, 440]];
  return (
    <svg viewBox="158 91 388 346" preserveAspectRatio="xMinYMin slice" fill="none" role="img" aria-label="Map canvas">
      {[westLand, eastLand, lowerLand].map((p, i) => (
        <path key={i} d={line(p) + "Z"} fill="#b7d94b" />
      ))}
      {BORDERS.map((b, i) => (
        <g key={i}>
          <path d={line(b)} stroke="#7d8a55" strokeWidth=".8" />
          <path d={crosses(b, i === 1 ? 3 : 2, 2, 0.6)} stroke="#ee2a12" strokeWidth=".8" />
        </g>
      ))}
      <path d="M488 418V438" stroke="#7d8a55" />
      <path d={crosses([[158, 135], [172, 134], [184, 132]], 2, 2, 0.8)} stroke="#f01b14" strokeWidth=".9" />
      <path d={crosses([[471, 438], [484, 437]], 4, 2, 0) + crosses([[535, 438], [547, 433]], 3, 2, 0.5)} stroke="#ee2a12" strokeWidth=".8" />
      {Object.entries(c).map(([k, p]) => (
        <g key={k} stroke="#f00">
          <path d={line(p)} strokeWidth={k === "isle" ? 7 : 6} strokeLinejoin="round" />
          <path d={crosses(p, 3, 2, 1)} strokeWidth="1.500" />
        </g>
      ))}
      <path d="M411 293L419 293L421 305L411 308ZM183 131H188V137H183ZM390 338L403 336L401 346L388 346ZM452 377H459V388H450Z" fill="#f00" />
      <path d={crosses([[386, 374], [393, 377]], 5, 2, 0) + crosses([[420, 369], [425, 380]], 4, 2, 1) + "M416 384l5 4m0-4l-5 4"} stroke="#f00" strokeWidth="1.600" />
      <path d="M256 214L281 184L333 161L378 208L320 234Z" fill="#ff3737" />
      <path d="M307 237L379 194" stroke="#e02c2c" strokeWidth=".7" strokeDasharray="1 1" />
      <path d="M374 196L436 158" stroke="#ff8e8e" strokeWidth=".7" strokeDasharray="1 1" />
      <ellipse cx="318" cy="198" rx="75.500" ry="65" stroke="#000" strokeWidth="3" />
    </svg>
  );
};

/* ---------- panels ---------- */
const MENUS = ["Proje", "Düzenle", "Pencere", "Katman", "Ayarlar", "Eklentiler", "Vektör", "Raster", "Veritabanı", "Web", "Processing", "Yardım"];
const LAYERS = [
  { name: "Tr_Ek_", current: true, bg: "#3ab877", pen: "#d9e09a" },
  { name: "TUR_adm1", bg: "#b7d94b", pen: "#e3702c" },
];
const ALGOS = ["Variable dista...", "Fixed distanc...", "Intersection", "Merge vector..."];

const Expander = ({ open }) => (
  <svg width="5" height="5" viewBox="0 0 5 5" fill="none">
    <path d={open ? "M4.500 .5V4.500H.5Z" : "M1 .5L4 2.500L1 4.500Z"} fill={open ? "#333" : "#fff"} stroke={open ? "#333" : "#aaa"} strokeWidth=".7" />
  </svg>
);

const TASKS = {
  start: <path d="M0 2.500L7 1.500V7.500H0ZM8 1.400L16 0V7.500H8ZM0 8.500H7V14.500L0 13.500ZM8 8.500H16V16L8 14.600Z" fill="#fff" />,
  explorer: <><path d="M0 2H6L7 1H14L16 3V14H0Z" fill="#edd98c" stroke="#c7ae5b" strokeWidth=".5" /><path d="M2 2H5M10 2H13" stroke="#3f9b58" /><path d="M6 2H8" stroke="#d33" /><path d="M0 5H16V13H0Z" fill="#f8e9a8" /><path d="M2 15V10Q2 9 3 9H13Q14 9 14 10V15H11V12H5V15Z" fill="#8fcdea" stroke="#5ba6cc" strokeWidth=".6" /></>,
  chrome: <><circle cx="8" cy="8" r="7.500" fill="#fc3" /><path d="M8 8L1.500 4.200A7.500 7.500 0 0 1 14.500 4.500H8Z" fill="#e04637" /><path d="M1.500 4.200A7.500 7.500 0 0 0 8 15.500L11 10L8 8L5 9.500Z" fill="#32a350" /><circle cx="8" cy="8" r="3.600" fill="#fff" /><circle cx="8" cy="8" r="2.800" fill="#4385f3" /></>,
  opera: <><ellipse cx="8" cy="8" rx="7.500" ry="8" fill="#e01b26" /><ellipse cx="8" cy="8" rx="3.200" ry="5.600" fill="#2f525c" /></>,
  paint: <><path d="M0 9Q1 2 8 2Q15 2 15 8Q14 13 9 12Q7 16 3 14Q0 13 0 9Z" fill="#c9e3f2" stroke="#78a7c0" strokeWidth=".6" /><circle cx="4" cy="7" r="1.500" fill="#d9463a" /><circle cx="7.500" cy="5" r="1.400" fill="#f0b72e" /><circle cx="3.500" cy="10.500" r="1.400" fill="#3a7fc4" /><circle cx="11" cy="6" r="1.300" fill="#47a64f" /><path d="M15 1L9 16" stroke="#d98a3a" strokeWidth="1.800" /><path d="M14 0L16 0L15 4L13 4Z" fill="#a85f28" /></>,
  qgis: <><path d="M8 1Q14 1 12 8Q10 15 5 15Q1 14 3 8Q4 2 8 1ZM8 4Q6 4 5.500 9Q5.500 12 7 12Q9 11 9.500 7Q10 4 8 4Z" fill="#e8ea62" stroke="#8a962c" strokeWidth=".6" fillRule="evenodd" /><path d="M9 11L13 16L14 13Z" fill="#e8ea62" /><path d="M4 12L11 5.500L10 4L14.500 0L14.500 6.500L12.500 6L5 13Z" fill="#246b35" /></>,
};
const TASK_LIST = [["start", 0], ["explorer", 0], ["chrome", 1], ["opera", 0], ["paint", 0], ["qgis", 2]];

export default function App() {
  return (
    <Page>
      <GlobalStyle />
      <TitleBar>
        <Svg s={10}>{TASKS.qgis}</Svg>
        <Title>QGIS2.6.1-Brighton</Title>
        <WindowButtons>
          <WindowButton aria-label="Minimize"><svg width="6" height="6"><path d="M0 4H6" stroke="#122" strokeWidth="2" /></svg></WindowButton>
          <WindowButton aria-label="Restore"><svg width="7" height="7" fill="none"><path d="M2.500 2V.5H6.500V4.500H5M.5 2.500H4.500V6.500H.5Z" stroke="#122" /></svg></WindowButton>
          <WindowButton $close aria-label="Close"><svg width="6" height="6"><path d="M1 1L5 5M5 1L1 5" stroke="#fff" strokeWidth="1.300" /></svg></WindowButton>
        </WindowButtons>
      </TitleBar>
      <MenuBar>{MENUS.map((m) => <MenuItem key={m}>{m}</MenuItem>)}</MenuBar>

      <ToolRow>
        <Handle $w={5} />
        <Tools w={118} names="file open save saveAs newPrint composer" />
        <Handle $w={7} $line />
        <Tools w={232} names="touch hand panSel zoomIn zoomOut zoom1 zoomFull zoomSel zoomLayer zoomLast zoomNext refresh" />
        <Handle $w={8} $line />
        <Tools w={217} names="identify action v select v deselect epsilon table abacus ruler v tip note" />
        <Group $w={8} />
        <More $w={9}>»</More>
        <Handle $w={7} $line />
        <Tools w={20} names="book" />
        <More $w={9}>»</More>
      </ToolRow>
      <ToolRow $tall>
        <Handle $w={5} />
        <Tools w={195} active={["edit", "addFeat"]} names="edits edit saveGrey addFeat moveFeat node del cut copy paste" />
        <Group $w={51} />
        <Handle $w={6} $line />
        <Tools w={117} active={["abcPin"]} names="abc abcPin abcG1 abcG2 abcG3 abcG4" />
        <Group $w={8} />
        <More $w={9}>»</More>
        <Handle $w={5} $line />
        <Tools w={117} names="plug hub terrain down up gps" />
        <Group $w={4} />
        <More $w={9}>»</More>
        <Handle $w={6} $line />
        <Tools w={19} names="csw" />
        <Group $w={9} />
        <Handle $w={5} $line />
        <Group $w={75} />
      </ToolRow>
      <ToolRow $tall>
        <Handle $w={5} />
        <Tools w={311} names="undo redo rotate simplify ring part fill delRing delPart reshape offset split splitParts merge attrs symbols" />
        <Handle $w={6} $line />
        <Tools w={233} names="h1 h2 h1 h2 bright bright contrast contrast grid heat raster sigma" />
        <Group $w={85} />
      </ToolRow>

      <Main>
        <SideBar>
          <SideHandle />
          <SideGroup $h={245}>
            {["vector", "raster", "postgis", "spatialite", "mssql", "oracle", "georaster", "wms", "wcs", "wfs", "csv", "newShape", "copyLayer"].map((n) => (
              <SideButton key={n} aria-label={n}>
                <Svg>{SIDE[n]}</Svg>
                {n === "newShape" && <Tri />}
              </SideButton>
            ))}
          </SideGroup>
          <SideHandle $line />
          <SideGroup $h={75}>
            {["cross", "gps", "label", "topo"].map((n) => (
              <SideButton key={n} aria-label={n}><Svg>{SIDE[n]}</Svg></SideButton>
            ))}
          </SideGroup>
          <SideButton aria-label="More tools">
            <svg width="12" height="15" fill="none"><path d="M1 8L3 10L5 8M1 11L3 13L5 11" stroke="#222" strokeWidth="1.200" /></svg>
          </SideButton>
        </SideBar>

        <DockColumn>
          <Dock $h={130}>
            <DockHead>Katmanlar</DockHead>
            <DockTools>
              <button aria-label="Add group"><Svg s={12}><path d="M2 6L6 3V11L2 14ZM6 4L10 1V9L6 12M10 4L13 5V14L8 15V8Z" fill="#eef2f5" stroke="#73808b" /></Svg></button>
              <button aria-label="Visibility"><Svg s={12}><path d="M1 8Q7 1 14 7Q8 13 1 8Z" fill="#e9f0f6" stroke="#8399ad" /><circle cx="7.500" cy="7" r="2.500" fill="#4779aa" /><path d="M10 12H16L13 15Z" fill="#222" /></Svg></button>
              <button aria-label="Filter"><Svg s={12}><path d="M1 1.500H15L10 8V15L6 12V8Z" fill="#3e9b4c" stroke="#25702f" /></Svg></button>
              {["M11 4V12M9 9L11 12L13 9", "M11 13V5M9 8L11 5L13 8"].map((d) => (
                <button key={d} aria-label="Expand or collapse"><Svg s={12}><path d="M1 1.500H15V14.500H1Z" fill="#fff" stroke="#6f9dd0" /><path d="M1 1H15V4H1Z" fill="#4b86c8" /><path d="M3 7H7M3 10H7" stroke="#999" /><path d={d} stroke="#e3241c" strokeWidth="2" /></Svg></button>
              ))}
              <button aria-label="Remove layer"><Svg s={12}><path d="M2 1.500H13V12.500H2Z" fill="#f6f6f6" stroke="#b0b0b0" /><path d="M9 10H15V14H9Z" fill="#e66b68" /></Svg></button>
            </DockTools>
            <Sheet>
              <ul>
                {LAYERS.map((l) => (
                  <LayerItem key={l.name} $current={l.current}>
                    <label>
                      <Check defaultChecked />
                      <Svg s={10}><path d="M0 0H16V16H0Z" fill={l.bg} /><path d="M3 14L5 9L11 1L14 3L8 11Z" fill={l.pen} stroke="#6d6a33" strokeWidth=".7" /></Svg>
                      {l.name}
                    </label>
                  </LayerItem>
                ))}
              </ul>
            </Sheet>
          </Dock>
          <Dock $h={213}>
            <DockHead>Geri al/Tekrarla</DockHead>
            <Sheet $top={2}><UndoRow>&lt;empty&gt;</UndoRow></Sheet>
            <ButtonPair>
              <DisabledButton disabled><Svg s={8}>{I.undo}</Svg>Geri al</DisabledButton>
              <DisabledButton disabled><Svg s={8}>{I.redo}</Svg>Tekrarla</DisabledButton>
            </ButtonPair>
          </Dock>
        </DockColumn>

        <MapFrame><Land /></MapFrame>

        <DockColumn $right>
          <DockHead>İşlem Araç Kutusu</DockHead>
          <Search aria-label="Araştır" placeholder="Araştır..." />
          <Sheet>
            <Tree>
              <TreeItem><Expander open />Son kullanılan algoritm...</TreeItem>
              {ALGOS.map((a) => <TreeItem key={a} $leaf><Gear />{a}</TreeItem>)}
              <TreeItem><Expander /><Gear />Geoalgorithms</TreeItem>
              <TreeItem><Expander /><Svg s={9}><path d="M0 10L5 4L9 9L5 14Z" fill="#333" /><circle cx="6" cy="9" r="3.500" fill="#4a80c0" /><path d="M8 1H14V8H8Z" fill="#c9302c" /><circle cx="12" cy="12" r="3.500" fill="#d8423c" /></Svg>Models [0 geoalg...</TreeItem>
              <TreeItem><Expander /><Svg s={9}><path d="M1 1H15V15H1Z" fill="#2d3a30" stroke="#111" /><path d="M4 4L8 7L4 10M8 12H12" stroke="#cfe3cf" strokeWidth="1.500" /></Svg>Scripts [0 geoalg...</TreeItem>
            </Tree>
          </Sheet>
          <SelectBox>
            <Select aria-label="Interface mode" defaultValue="s"><option value="s">Simplified interface</option></Select>
            <Tri />
          </SelectBox>
        </DockColumn>
      </Main>

      <StatusBar>
        <StatusText>Doğrulama bitti.</StatusText>
        <IconButton aria-label="Toggle extents"><Svg s={10}><path d="M3 2Q8 1 7 6L12 13Q6 16 4 11ZM8 3L13 1L12 6M3 8L1 12" fill="#ddd" stroke="#222" strokeWidth="1.400" /><circle cx="8.500" cy="10.500" r="2" stroke="#222" /></Svg></IconButton>
        <CoordLabel>Koordinat:<CoordInput defaultValue="28.365,41.611" /></CoordLabel>
        <InlineLabel $wide>
          Ölçek
          <SelectBox $fixed>
            <Select $plain defaultValue="a"><option value="a">1:651.979</option></Select>
            <svg width="5" height="4" fill="none"><path d="M.5 .5L2.500 3L4.500 .5" stroke="#444" /></svg>
          </SelectBox>
        </InlineLabel>
        <InlineLabel><Check defaultChecked />Görüntüle</InlineLabel>
        <Muted>EPSG:4326</Muted>
        <IconButton aria-label="Projection"><Svg s={10}><circle cx="8" cy="8" r="6" fill="#aaa" stroke="#777" /><path d="M8 0V16M0 8H16" stroke="#888" strokeWidth="2" /><circle cx="8" cy="8" r="3" fill="#ddd" /></Svg></IconButton>
        <IconButton aria-label="Messages"><Svg s={10}><path d="M8 1L15.500 15H.5Z" fill="#f9f5cf" stroke="#a99c32" /><path d="M8 5V11M8 12V14" stroke="#555" strokeWidth="1.600" /></Svg></IconButton>
      </StatusBar>

      <TaskBar>
        {TASK_LIST.map(([n, level]) => (
          <TaskButton key={n} $start={n === "start"} $level={level} aria-label={n}>
            <Svg s={n === "start" ? 16 : 19}>{TASKS[n]}</Svg>
          </TaskButton>
        ))}
        <Tray>
          <Tri dir="up" />
          <Svg s={11}><path d="M13 4A6 6 0 1 0 13 12" stroke="#f0b629" strokeWidth="3.500" /><circle cx="11" cy="11" r="4.500" fill="#2e9d46" /><path d="M9 11L11 13L14 9" stroke="#fff" strokeWidth="1.500" /></Svg>
          <Svg s={11}><path d="M5 3.500H15V11H5ZM8 14H13M10 11V14M1 1V6H4V1M2.500 6V14" stroke="#e6eef0" strokeWidth="1.400" /></Svg>
          <Svg s={11}><path d="M0 5H3L8 1V15L3 11H0Z" fill="#fff" /><path d="M10 5Q12 8 10 11M12.500 3Q15.500 8 12.500 13" stroke="#dfe8ea" strokeWidth="1.200" /></Svg>
          <Clock><span>19:31</span><span>16.12.2017</span></Clock>
        </Tray>
      </TaskBar>
    </Page>
  );
}
